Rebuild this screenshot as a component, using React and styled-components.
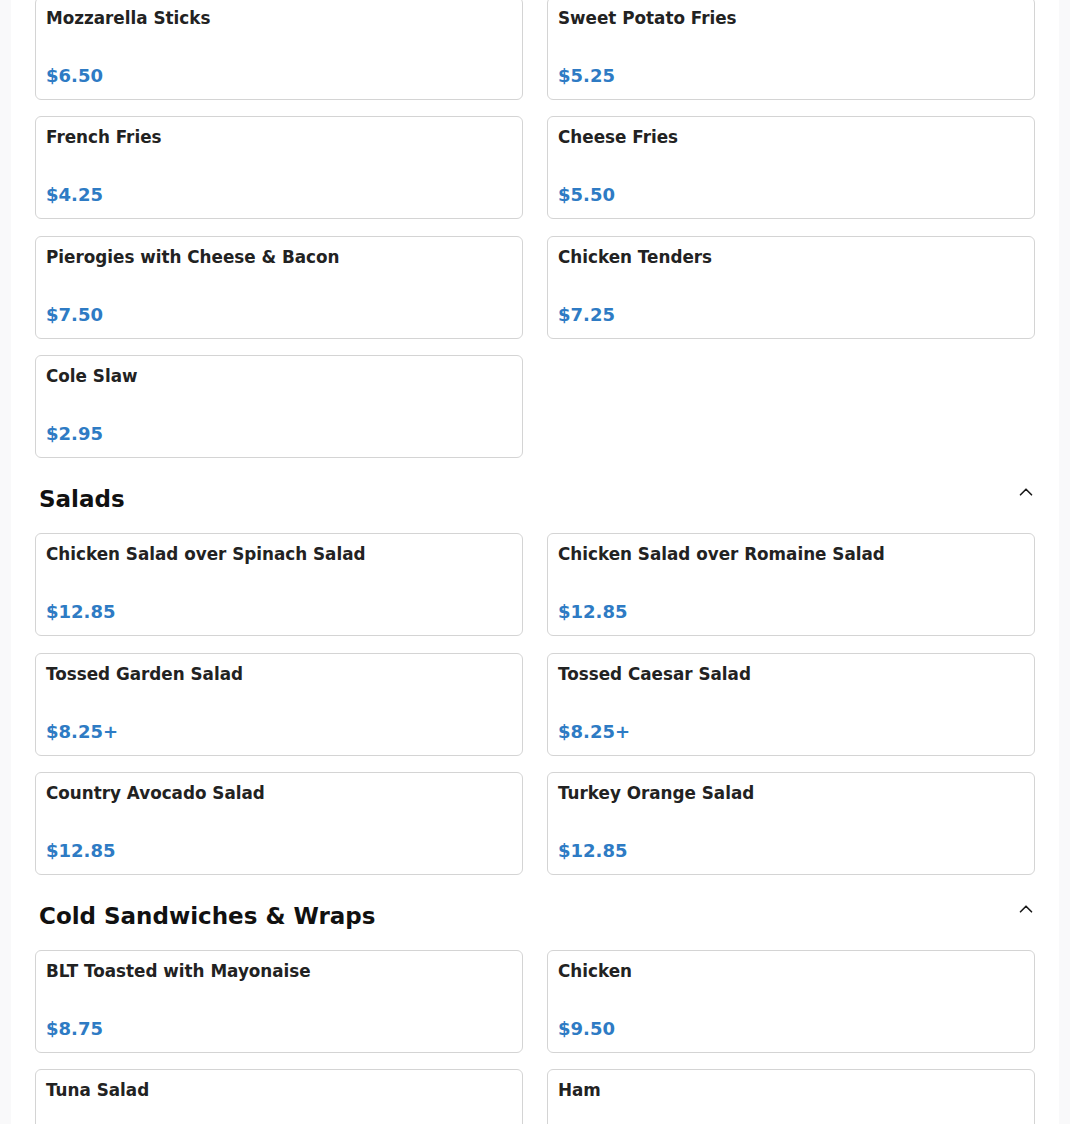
import React from 'react';
import styled, { createGlobalStyle } from 'styled-components';
import { ChevronUp } from 'lucide-react';

const GlobalStyle = createGlobalStyle`
  html, body {
    margin: 0;
    padding: 0;
    background-color: #f9f9fa;
    font-family: "DejaVu Sans", Verdana, sans-serif;
    overflow: hidden;
  }
`;

const Page = styled.div`
  max-width: 1048px;
  margin: -3px auto 0;
  background-color: #ffffff;
  padding: 0 24px 40px;
  box-sizing: border-box;
  min-height: 1200px;
`;

const Section = styled.section`
  & + & {
    margin-top: 28px;
  }
`;

const SectionHeader = styled.div`
  display: flex;
  justify-content: space-between;
  align-items: flex-start;
  padding: 0 0 0 4px;
  margin-bottom: 21px;
`;

const SectionTitle = styled.h2`
  margin: 0;
  font-size: 23px;
  font-weight: bold;
  color: #111;
  line-height: normal;
`;

const Toggle = styled.button`
  background: none;
  border: none;
  padding: 0;
  margin: -5px -2px 0 0;
  color: #1a1a1a;
  display: flex;
  cursor: pointer;
`;

const ItemGrid = styled.div`
  display: grid;
  grid-template-columns: 1fr 1fr;
  column-gap: 24px;
  row-gap: 16.4px;
`;

const ItemCard = styled.div`
  border: 1px solid #d4d4d4;
  border-radius: 6px;
  padding: 10px 10px 13px;
  display: flex;
  flex-direction: column;
  height: 103px;
  box-sizing: border-box;
`;

const ItemName = styled.div`
  font-size: 16.8px;
  font-weight: bold;
  color: #222;
  line-height: normal;
`;

const ItemPrice = styled.div`
  margin-top: auto;
  font-size: 18px;
  font-weight: bold;
  color: #2e7bc4;
  line-height: normal;
`;

const menu = [
  {
    title: null,
    items: [
      ['Mozzarella Sticks', '$6.50'],
      ['Sweet Potato Fries', '$5.25'],
      ['French Fries', '$4.25'],
      ['Cheese Fries', '$5.50'],
      ['Pierogies with Cheese & Bacon', '$7.50'],
      ['Chicken Tenders', '$7.25'],
      ['Cole Slaw', '$2.95'],
    ],
  },
  {
    title: 'Salads',
    items: [
      ['Chicken Salad over Spinach Salad', '$12.85'],
      ['Chicken Salad over Romaine Salad', '$12.85'],
      ['Tossed Garden Salad', '$8.25+'],
      ['Tossed Caesar Salad', '$8.25+'],
      ['Country Avocado Salad', '$12.85'],
      ['Turkey Orange Salad', '$12.85'],
    ],
  },
  {
    title: 'Cold Sandwiches & Wraps',
    items: [
      ['BLT Toasted with Mayonaise', '$8.75'],
      ['Chicken', '$9.50'],
      ['Tuna Salad', '$9.25'],
      ['Ham', '$9.25'],
    ],
  },
];

export default function App() {
  return (
    <>
      <GlobalStyle />
      <Page>
        {menu.map((section, i) => (
          <Section key={i}>
            {section.title && (
              <SectionHeader>
                <SectionTitle>{section.title}</SectionTitle>
                <Toggle aria-label="Collapse">
                  <ChevronUp size={22} strokeWidth={1.8} />
                </Toggle>
              </SectionHeader>
            )}
            <ItemGrid>
              {section.items.map(([name, price]) => (
                <ItemCard key={name}>
                  <ItemName>{name}</ItemName>
                  <ItemPrice>{price}</ItemPrice>
                </ItemCard>
              ))}
            </ItemGrid>
          </Section>
        ))}
      </Page>
    </>
  );
}
